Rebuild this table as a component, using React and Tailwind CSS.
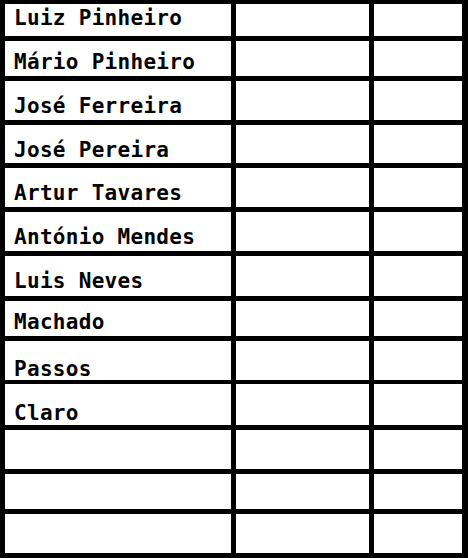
const rows = [
  { name: 'Luiz Pinheiro', h: 'h-[32px]', pt: 'pt-[4px]' },
  { name: 'Mário Pinheiro', h: 'h-[35px]', pt: 'pt-[11px]' },
  { name: 'José Ferreira', h: 'h-[39px]', pt: 'pt-[15px]' },
  { name: 'José Pereira', h: 'h-[38px]', pt: 'pt-[15px]' },
  { name: 'Artur Tavares', h: 'h-[39px]', pt: 'pt-[15px]' },
  { name: 'António Mendes', h: 'h-[39px]', pt: 'pt-[15px]' },
  { name: 'Luis Neves', h: 'h-[40px]', pt: 'pt-[15px]' },
  { name: 'Machado', h: 'h-[35px]', pt: 'pt-[11px]' },
  { name: 'Passos', h: 'h-[38px]', pt: 'pt-[18px]' },
  { name: 'Claro', h: 'h-[41px]', pt: 'pt-[19px]' },
  { name: '', h: 'h-[39px]', pt: '' },
  { name: '', h: 'h-[35px]', pt: '' },
  { name: '', h: 'h-[39px]', pt: '' },
]

function App() {
  return (
    <div className="w-[468px] h-[558px] bg-black pt-[4px] pl-[5px] pr-[6px] pb-[5px] flex flex-col gap-[5px] font-['DejaVu_Sans_Mono',monospace]">
      {rows.map((r, i) => (
        <div key={i} className={`grid grid-cols-[226px_133px_88px] gap-[5px] ${r.h}`}>
          <div className={`bg-white pl-[9px] ${r.pt}`}>
            <span className="block text-[21px] leading-[21px] font-bold tracking-[0.3px] text-black whitespace-nowrap">
              {r.name}
            </span>
          </div>
          <div className="bg-white" />
          <div className="bg-white" />
        </div>
      ))}
    </div>
  )
}

export default App
